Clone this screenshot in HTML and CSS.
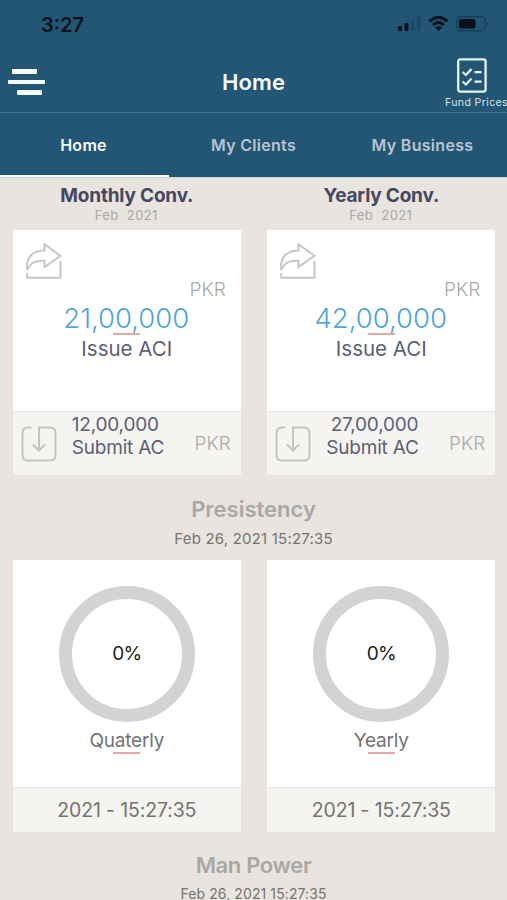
FILE: index.html
```html
<!DOCTYPE html>
<html lang="en">
<head>
<meta charset="utf-8">
<title>Home</title>
<link rel="stylesheet" href="styles.css">
</head>
<body>
<svg class="defs" width="0" height="0">
  <symbol id="share" viewBox="0 0 36 36"><path d="M1.200 27C-.2 15 6 7.500 18.500 7.500V1.200L34.500 12.800 18.500 24V17.800C10 17.500 4.500 19 1.200 27M1.200 30V34.800H34.500V18"/></symbol>
  <symbol id="download" viewBox="0 0 36 36"><path d="M10.500 1.500H7Q1.500 1.500 1.500 7V29Q1.500 34.500 7 34.500H29Q34.500 34.500 34.500 29V7Q34.500 1.500 29 1.500H18V24M12 18.500L18 24.500 24 18.500"/></symbol>
</svg>
<header class="header">
  <div class="status">
    <span class="time">3:27</span>
    <svg class="indicators" width="94" height="18" viewBox="0 0 94 18">
      <rect x="1" y="11" width="4" height="5" rx="1.300"/><rect x="7.500" y="8" width="4" height="8" rx="1.300"/>
      <g opacity=".18"><rect x="14" y="4.500" width="3.500" height="11.500" rx="1"/><rect x="20" y="1.500" width="3.500" height="14.500" rx="1"/></g>
      <g fill="none" stroke="#07121c" stroke-width="3"><path d="M32.500 6.300Q41.500-1.900 50.500 6.300"/><path d="M36 10Q41.500 5 47 10"/></g>
      <path d="M38 12.500Q41.500 9.500 45 12.500L41.500 16Z"/>
      <rect x="59.700" y="1.700" width="28.600" height="14" rx="4" fill="none" stroke="#153e57" stroke-width="1.400"/>
      <rect x="62" y="4" width="16.500" height="9.500" rx="2"/><path d="M90 6.500Q94 8.500 90 11Z" fill="#153e57"/>
    </svg>
  </div>
  <div class="bar">
    <div class="menu"><i></i><i></i><i></i></div>
    <h1>Home</h1>
    <div class="fund">
      <svg width="30" height="35" viewBox="0 0 30 35" fill="none" stroke="#e4f7ff" stroke-width="2.300"><rect x="1.200" y="1.400" width="27.400" height="32.200" rx="2"/><path d="M5.500 14L9 17 14.500 11M5.500 23.500L9 26.500 14.500 20.500M17.500 14.200H24.500M17.500 23.700H24.500"/></svg>
      <span>Fund Prices</span>
    </div>
  </div>
  <nav class="tabs"><a class="active">Home</a><a>My Clients</a><a>My Business</a></nav>
</header>
<main>
  <section class="grid">
    <div>
      <h2>Monthly Conv.</h2>
      <p class="month">Feb&nbsp; 2021</p>
      <article class="card conv">
        <svg class="share"><use href="#share"/></svg>
        <p class="pkr">PKR</p>
        <p class="amount">21,00,000</p>
        <hr>
        <p class="issue">Issue ACI</p>
        <footer><svg class="download"><use href="#download"/></svg><div class="submit"><p class="left">12,00,000</p><p>Submit AC</p></div><span class="pkr-small">PKR</span></footer>
      </article>
    </div>
    <div>
      <h2>Yearly Conv.</h2>
      <p class="month">Feb&nbsp; 2021</p>
      <article class="card conv">
        <svg class="share"><use href="#share"/></svg>
        <p class="pkr">PKR</p>
        <p class="amount">42,00,000</p>
        <hr>
        <p class="issue">Issue ACI</p>
        <footer><svg class="download"><use href="#download"/></svg><div class="submit"><p class="right">27,00,000</p><p>Submit AC</p></div><span class="pkr-small">PKR</span></footer>
      </article>
    </div>
  </section>
  <h3>Presistency</h3>
  <p class="date">Feb 26, 2021 15:27:35</p>
  <section class="grid persist">
    <article class="card"><div class="ring">0%</div><p class="period">Quaterly</p><hr><footer>2021 - 15:27:35</footer></article>
    <article class="card"><div class="ring">0%</div><p class="period">Yearly</p><hr><footer>2021 - 15:27:35</footer></article>
  </section>
  <h3 class="power">Man Power</h3>
  <p class="date small">Feb 26, 2021 15:27:35</p>
</main>
</body>
</html>
```
FILE: styles.css
```css
* { box-sizing: border-box; margin: 0; padding: 0; }
body { width: 507px; height: 900px; overflow: hidden; background: #e8e4e0; font-family: Inter, "Liberation Sans", sans-serif; }
p, h1, h2, h3, span { white-space: nowrap; }
.defs { display: block; }
.header { height: 178px; background: #235574; border-bottom: 1px solid #cbd3d8; }
.status { height: 48px; display: flex; justify-content: space-between; padding: 15px 16px 0 41px; }
.time { font-size: 20px; line-height: 20px; font-weight: 600; color: #07121c; }
.indicators { width: 94px; height: 18px; fill: #07121c; }
.bar { height: 65px; border-bottom: 1px solid #487590; display: grid; grid-template-columns: 169px 169px 169px; }
.menu { display: flex; flex-direction: column; gap: 6px; padding: 21px 0 0 8px; }
.menu i { width: 37px; height: 4.700px; border-radius: 1px; background: #f5fcff; }
.menu i:first-child { width: 25px; margin-left: 4px; }
.menu i:last-child { width: 25px; margin-left: 9px; }
h1 { color: #f4fbff; font-size: 22px; font-weight: 600; line-height: 69px; text-align: center; letter-spacing: .15px; }
.fund { display: flex; flex-direction: column; align-items: flex-end; padding-top: 10px; }
.fund svg { margin-right: 20px; }
.fund span { font-size: 10.500px; letter-spacing: .4px; line-height: 19px; color: #d7e5ed; margin-right: -1px; }
.tabs { height: 64px; display: grid; grid-template-columns: 169px 169px 169px; }
.tabs a { text-align: center; font-size: 16px; font-weight: 600; line-height: 60px; padding-top: 2px; height: 64px; letter-spacing: .3px; color: #b9c5d0; border-bottom: 2px solid transparent; }
.tabs a:first-child { padding-right: 2px; }
.tabs .active { color: #f4fbff; border-color: #f4f9fb; }
.grid { display: grid; grid-template-columns: 228px 228px; column-gap: 26.500px; padding-left: 12.800px; }
h2 { padding-top: 7px; line-height: 21px; font-size: 19px; font-weight: 700; letter-spacing: -.2px; text-align: center; color: #454860; }
.month { font-size: 13px; line-height: 19px; letter-spacing: .4px; color: #aaa7aa; text-align: center; padding-right: 1px; }
.card { background: #fff; display: flex; flex-direction: column; text-align: center; }
.conv { height: 244.500px; margin-top: 5px; }
.share { display: block; width: 36px; height: 36px; margin: 13px 0 0 13px; fill: none; stroke: #c6c6c6; stroke-width: 2; }
.pkr { line-height: 22px; font-size: 19px; font-weight: 300; color: #aaa; text-align: right; padding-right: 15px; }
.amount { line-height: 35px; font-size: 27.500px; color: #51a5dc; font-weight: 350; padding-right: 1px; }
hr { width: 27px; height: 2px; border: 0; align-self: center; background: #e5aaa4; }
.conv hr { margin-top: -3px; }
.issue { line-height: 27px; font-size: 20.500px; color: #5b6077; }
.card footer { margin-top: auto; background: #f5f4f0; border-top: 1px solid #e6e4e1; }
.conv footer { height: 64px; display: flex; }
.download { width: 36px; height: 36px; margin: 14px 0 0 8px; fill: none; stroke: #c3c3c2; stroke-width: 2; }
.submit { width: 92px; margin: 1px 0 0 15px; color: #5b6077; font-size: 19px; line-height: 23px; letter-spacing: -.2px; }
.left { text-align: left; }
.right { text-align: right; }
.pkr-small { margin-left: auto; padding-right: 10px; font-size: 19px; font-weight: 300; line-height: 64px; color: #aaa; }
h3 { margin-top: 22px; line-height: 24px; text-align: center; font-size: 22px; font-weight: 600; color: #aaa7a4; }
.date { margin-top: 8px; line-height: 20px; font-size: 15px; letter-spacing: .2px; text-align: center; color: #77736f; }
.persist { margin-top: 11px; }
.persist .card { height: 272px; }
.ring { width: 136px; height: 136px; border: 13.500px solid #d3d3d3; border-radius: 50%; margin: 26px auto 0; font-size: 19px; letter-spacing: -.8px; line-height: 109px; color: #222; }
.period { font-size: 19px; line-height: 26px; margin-top: 6px; letter-spacing: -.2px; color: #737373; }
.persist hr { margin-top: -2px; }
.persist footer { height: 45px; line-height: 44px; font-size: 19.500px; letter-spacing: -.15px; color: #737373; }
.power { margin-top: 21px; letter-spacing: -.35px; }
.date.small { font-size: 14px; letter-spacing: .1px; margin-top: 7px; }
```
